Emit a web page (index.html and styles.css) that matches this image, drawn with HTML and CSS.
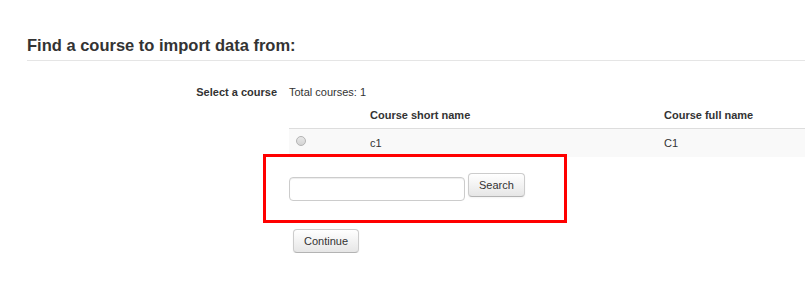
FILE: index.html
```html
<!DOCTYPE html>
<html lang="en">
<head>
  <meta charset="UTF-8" />
  <title>Import - Find a course</title>
  <link rel="stylesheet" href="styles.css">
</head>
<body>

  <div class="page">
    <h2>Find a course to import data from:</h2>

    <div class="form-item">
      <div class="item-title">Select a course</div>
      <div class="item-element">
        <div class="total">Total courses: 1</div>

        <table class="course-table">
          <thead>
            <tr>
              <th class="col-select"></th>
              <th class="col-short">Course short name</th>
              <th class="col-full">Course full name</th>
            </tr>
          </thead>
          <tbody>
            <tr>
              <td><span class="radio"></span></td>
              <td>c1</td>
              <td>C1</td>
            </tr>
          </tbody>
        </table>

        <div class="search-row">
          <input type="text" class="search-input" />
          <button class="btn">Search</button>
        </div>

        <div class="actions">
          <button class="btn">Continue</button>
        </div>
      </div>
    </div>

    <!-- highlight box from the screenshot -->
    <div class="highlight"></div>
  </div>

</body>
</html>
```

FILE: styles.css
```css
html, body {
  overflow: hidden;
}

body {
  margin: 0;
  padding: 0;
  font-family: "Liberation Sans", Arial, sans-serif;
  font-size: 11px;
  line-height: 20px;
  color: #333;
  background-color: #fff;
}

.page {
  position: relative;
  padding-left: 27px;
  padding-top: 35px;
}

h2 {
  margin: 0;
  font-size: 16.5px;
  line-height: 20px;
  font-weight: bold;
  color: #333;
  padding-bottom: 5px;
  border-bottom: 1px solid #e5e5e5;
}

.form-item {
  display: grid;
  grid-template-columns: 250px 1fr;
  column-gap: 12px;
  margin-top: 21px;
}

.item-title {
  text-align: right;
  font-weight: bold;
}

.course-table {
  width: 100%;
  border-collapse: collapse;
  table-layout: fixed;
}

.course-table th {
  text-align: left;
  font-weight: bold;
  padding: 3px 4px;
  border-bottom: 1px solid #ddd;
}

.course-table td {
  padding: 4px;
  vertical-align: top;
  background-color: #f9f9f9;
}

.col-select {
  width: 69px;
}

.col-short {
  width: 286px;
}

.radio {
  display: block;
  width: 8px;
  height: 8px;
  margin-left: 3px;
  margin-top: 3px;
  border: 1px solid #b5b5b5;
  border-radius: 50%;
  background: linear-gradient(#e8e8e8, #d4d4d4);
}

.search-row {
  display: flex;
  align-items: flex-start;
  gap: 3px;
  margin-top: 16px;
}

.search-input {
  box-sizing: border-box;
  width: 176px;
  height: 24px;
  margin: 4px 0 0 0;
  padding: 2px 6px;
  border: 1px solid #ccc;
  border-radius: 4px;
  box-shadow: inset 0 1px 1px rgba(0, 0, 0, 0.075);
  font-family: "Liberation Sans", Arial, sans-serif;
  font-size: 11px;
}

.btn {
  box-sizing: border-box;
  height: 24px;
  padding: 4px 10px;
  margin: 0;
  font-family: "Liberation Sans", Arial, sans-serif;
  font-size: 11px;
  line-height: 14px;
  color: #333;
  background: linear-gradient(#ffffff, #e6e6e6);
  border: 1px solid #ccc;
  border-bottom-color: #b3b3b3;
  border-radius: 4px;
  box-shadow: inset 0 1px 0 rgba(255, 255, 255, 0.2), 0 1px 2px rgba(0, 0, 0, 0.05);
  cursor: pointer;
}

.actions {
  margin-top: 28px;
  margin-left: 4px;
}

.highlight {
  position: absolute;
  left: 263px;
  top: 154px;
  width: 304px;
  height: 69px;
  box-sizing: border-box;
  border: 3px solid #ff0000;
}
```
